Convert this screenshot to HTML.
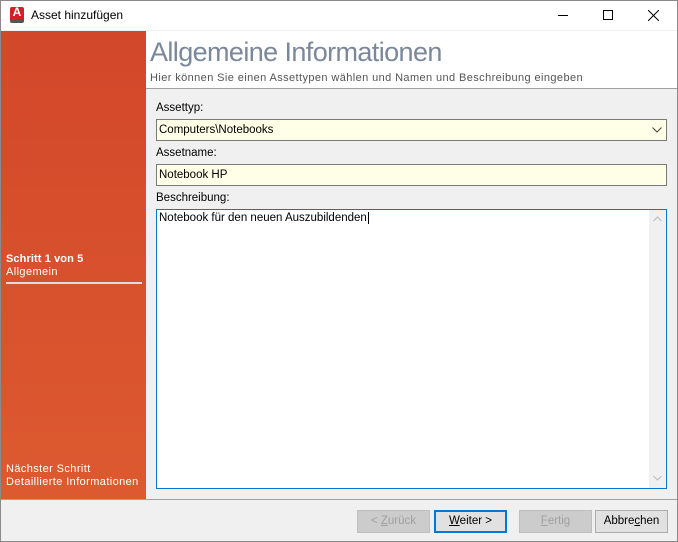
<!DOCTYPE html>
<html><head><meta charset="utf-8"><style>
*{margin:0;padding:0;box-sizing:border-box}
body{width:678px;height:542px;overflow:hidden;background:#f0f0f0;font-family:"Liberation Sans",sans-serif;font-size:11.5px;color:#000;position:relative}
.abs{position:absolute}
.win{left:0;top:0;width:678px;height:542px;border:1px solid #8a8a8a}
.title{left:1px;top:1px;width:676px;height:29px;background:#fff}
.side{left:1px;top:31px;width:145px;height:468px;background:linear-gradient(#d2472a,#dd5a30)}
.side div{color:#fff;font-size:11px;line-height:13px;letter-spacing:0.4px}
.hdr{left:146px;top:31px;width:531px;height:58px;background:#fff;border-bottom:1px solid #a0a0a0}
.box{border:1px solid #7a7a7a;background:#fffee6;height:22px;padding-left:2px;line-height:20px}
.btn{top:510px;height:23px;border:1px solid #adadad;background:#e1e1e1;text-align:center;line-height:21px;font-size:11.5px}
</style></head><body>
<div class="abs win"></div>
<div class="abs title"></div>
<div class="abs" style="left:10px;top:7px;width:14px;height:16px;background:#d32027;border-radius:2px;border-bottom:3px solid #555"></div>
<div class="abs" style="left:11px;top:5px;width:12px;color:#fff;font-weight:bold;font-size:12px;text-align:center">A</div>
<div class="abs" style="left:31px;top:8px;font-size:12px">Asset hinzufügen</div>
<div class="abs" style="left:558px;top:15px;width:10px;height:1px;background:#000"></div>
<div class="abs" style="left:603px;top:10px;width:10px;height:10px;border:1px solid #000"></div>
<svg class="abs" style="left:648px;top:10px" width="11" height="11"><path d="M0 0L11 11M11 0L0 11" stroke="#000" stroke-width="1"/></svg>
<div class="abs side">
<div class="abs" style="left:5px;top:222px;font-weight:bold;letter-spacing:0.1px">Schritt 1 von 5</div>
<div class="abs" style="left:5px;top:235px">Allgemein</div>
<div class="abs" style="left:5px;top:251px;width:136px;height:2px;background:#ddd"></div>
<div class="abs" style="left:5px;top:432px">Nächster Schritt</div>
<div class="abs" style="left:5px;top:445px">Detaillierte Informationen</div>
</div>
<div class="abs hdr">
<div class="abs" style="left:4px;top:6px;font-size:27px;color:#7a889a;letter-spacing:-0.6px">Allgemeine Informationen</div>
<div class="abs" style="left:4px;top:41px;font-size:11px;color:#555;letter-spacing:0.4px">Hier können Sie einen Assettypen wählen und Namen und Beschreibung eingeben</div>
</div>
<div class="abs" style="left:156px;top:102px">Assettyp:</div>
<div class="abs box" style="left:156px;top:119px;width:511px">Computers\Notebooks</div>
<svg class="abs" style="left:652px;top:127px" width="10" height="6"><path d="M0.5 0.5L5 5L9.5 0.5" stroke="#444" fill="none"/></svg>
<div class="abs" style="left:156px;top:147px">Assetname:</div>
<div class="abs box" style="left:156px;top:164px;width:511px">Notebook HP</div>
<div class="abs" style="left:156px;top:192px">Beschreibung:</div>
<div class="abs" style="left:156px;top:209px;width:511px;height:280px;border:1px solid #0078d7;background:#fff;padding:2px 2px">Notebook für den neuen Auszubildenden<span style="border-left:1px solid #000;margin-left:1px"></span></div>
<div class="abs" style="left:649px;top:210px;width:17px;height:278px;background:#f0f0f0"></div>
<svg class="abs" style="left:653px;top:216px" width="9" height="6"><path d="M0.5 5L4.5 1L8.5 5" stroke="#bbb" fill="none"/></svg>
<svg class="abs" style="left:653px;top:475px" width="9" height="6"><path d="M0.5 1L4.5 5L8.5 1" stroke="#bbb" fill="none"/></svg>
<div class="abs" style="left:1px;top:499px;width:676px;height:1px;background:#a0a0a0"></div>
<div class="abs btn" style="left:357px;width:73px;color:#a0a0a0;background:#cccccc;border-color:#bfbfbf">&lt; <u>Z</u>urück</div>
<div class="abs btn" style="left:434px;width:73px;border:2px solid #0078d7;line-height:19px"><u>W</u>eiter &gt;</div>
<div class="abs btn" style="left:519px;width:73px;color:#a0a0a0;background:#cccccc;border-color:#bfbfbf"><u>F</u>ertig</div>
<div class="abs btn" style="left:595px;width:73px">Abbre<u>c</u>hen</div>
</body></html>
